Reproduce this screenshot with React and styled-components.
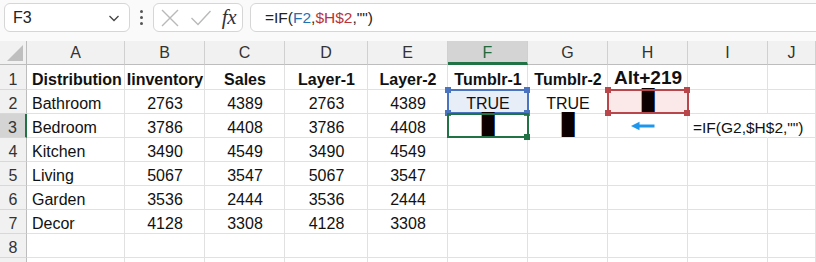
import React from "react";
import styled, { createGlobalStyle, css } from "styled-components";

const Global = createGlobalStyle`
  html, body { margin: 0; padding: 0; background: #ffffff; }
  body { font-family: "Liberation Sans", Arial, sans-serif; overflow: hidden; width: 816px; height: 262px; }
`;

const Page = styled.div`
  width: 816px;
  height: 262px;
  overflow: hidden;
  background: #fafafa;
`;

const Toolbar = styled.div`
  display: flex;
  align-items: flex-start;
  height: 41px;
  box-sizing: border-box;
  padding: 3px 0 0 4px;
  background: #fafafa;
`;

const Box = styled.div`
  height: 29px;
  box-sizing: border-box;
  border: 1px solid #d6d6d6;
  border-radius: 6px;
  background: #ffffff;
  display: flex;
  align-items: center;
`;

const NameBox = styled(Box)`
  width: 126px;
  padding: 0 8px 0 8px;
  justify-content: space-between;
  font-size: 16px;
  color: #222;
`;

const Dots = styled.div`
  width: 4px;
  height: 29px;
  margin: 0 10px 0 9px;
  display: flex;
  flex-direction: column;
  justify-content: center;
  align-items: center;
  gap: 3px;
  span {
    width: 3px;
    height: 3px;
    border-radius: 50%;
    background: #555;
  }
`;

const FxBox = styled(Box)`
  width: 90px;
  padding: 0 6px 0 6px;
  justify-content: space-between;
  margin-right: 7px;
`;

const FxText = styled.span`
  font-family: "Liberation Serif", "Times New Roman", serif;
  font-style: italic;
  font-size: 21px;
  color: #333;
  letter-spacing: -0.5px;
`;

const FormulaBox = styled(Box)`
  flex: 1;
  margin-right: -12px;
  padding-left: 14px;
  font-size: 15.5px;
  color: #222;
  white-space: nowrap;
`;

const Ref = styled.span`
  color: ${(p) => p.$c};
`;

const Sheet = styled.div`
  display: grid;
  grid-template-columns: 27px 98px 80px 80px 83px 80px 80px 80px 80px 80px 1fr;
  grid-template-rows: 24px 25px;
  grid-auto-rows: 24px;
  background: #ffffff;
`;

const headerBase = css`
  box-sizing: border-box;
  display: flex;
  align-items: center;
  justify-content: center;
  font-size: 16px;
  color: #333;
  background: ${(p) => (p.$active ? "#d4d4d4" : "#f1f1f1")};
`;

const Corner = styled.div`
  ${headerBase};
  position: relative;
  border-right: 1px solid #bdbdbd;
  border-bottom: 1px solid #bdbdbd;
`;

const CornerTri = styled.span`
  position: absolute;
  right: 3px;
  bottom: 3px;
  width: 0;
  height: 0;
  border-style: solid;
  border-width: 0 0 16px 16px;
  border-color: transparent transparent #bfbfbf transparent;
`;

const ColHead = styled.div`
  ${headerBase};
  color: ${(p) => (p.$active ? "#1e6b3f" : "#333")};
  border-right: 1px solid #d0d0d0;
  border-bottom: ${(p) => (p.$active ? "3px solid #217346" : "1px solid #bdbdbd")};
  padding-top: ${(p) => (p.$active ? "2px" : "0")};
`;

const RowHead = styled.div`
  ${headerBase};
  border-right: ${(p) => (p.$active ? "2px solid #217346" : "1px solid #bdbdbd")};
  border-bottom: 1px solid #d8d8d8;
  align-items: flex-end;
  padding-bottom: 0;
`;

const frameColors = {
  blue: { line: "#4a74c0", fill: "#e8eef8" },
  green: { line: "#217346", fill: "transparent" },
  red: { line: "#b8464b", fill: "#fbe9ea" },
};

const Cell = styled.div`
  position: relative;
  box-sizing: border-box;
  display: flex;
  align-items: flex-end;
  justify-content: ${(p) => (p.$align === "left" ? "flex-start" : "center")};
  padding: 0 4px 0 5px;
  border-right: ${(p) => (p.$noRight ? "1px solid transparent" : "1px solid #e1e1e1")};
  border-bottom: 1px solid #e1e1e1;
  font-size: ${(p) => (p.$big ? "19px" : "16px")};
  font-weight: ${(p) => (p.$bold ? 700 : 400)};
  color: #111;
  white-space: nowrap;
  overflow: visible;
  background: ${(p) => (p.$frame ? frameColors[p.$frame].fill : "transparent")};
  z-index: ${(p) => (p.$frame === "green" ? 3 : p.$frame ? 2 : "auto")};
`;

const Frame = styled.span`
  position: absolute;
  top: -1px;
  left: -1px;
  right: -2px;
  bottom: -1px;
  border: 2px solid ${(p) => frameColors[p.$c].line};
  pointer-events: none;
`;

const Handle = styled.span`
  position: absolute;
  width: 6px;
  height: 6px;
  background: ${(p) => frameColors[p.$c].line};
  ${(p) => (p.$v === "t" ? "top: -3px;" : "bottom: -3px;")}
  ${(p) => (p.$h === "l" ? "left: -3px;" : "right: -3px;")}
  z-index: 4;
`;

const Block = styled.span`
  font-family: "DejaVu Sans Mono", monospace;
  font-size: 21px;
  line-height: 21px;
  color: #0c0000;
  margin-bottom: 1px;
`;

const Arrow = styled.svg`
  align-self: center;
  margin-left: 18px;
`;

const FormulaCellText = styled.span`
  font-size: 15.5px;
`;

const cols = ["A", "B", "C", "D", "E", "F", "G", "H", "I", "J"];

const data = [
  ["Bathroom", 2763, 4389, 2763, 4389],
  ["Bedroom", 3786, 4408, 3786, 4408],
  ["Kitchen", 3490, 4549, 3490, 4549],
  ["Living", 5067, 3547, 5067, 3547],
  ["Garden", 3536, 2444, 3536, 2444],
  ["Decor", 4128, 3308, 4128, 3308],
];

const headers = ["Distribution", "Iinventory", "Sales", "Layer-1", "Layer-2", "Tumblr-1", "Tumblr-2"];

function Handles({ c, corners }) {
  return corners.map((k) => <Handle key={k} $c={c} $v={k[0]} $h={k[1]} />);
}

const allCorners = ["tl", "tr", "bl", "br"];

function Chevron() {
  return (
    <svg width="14" height="14" viewBox="0 0 14 14">
      <path d="M2.5 5 L7 9.5 L11.5 5" fill="none" stroke="#444" strokeWidth="1.3" />
    </svg>
  );
}

function CrossIcon() {
  return (
    <svg width="20" height="20" viewBox="0 0 20 20">
      <path d="M2 2 L18 18 M18 2 L2 18" stroke="#b9b9b9" strokeWidth="1.4" fill="none" />
    </svg>
  );
}

function CheckIcon() {
  return (
    <svg width="22" height="18" viewBox="0 0 22 18">
      <path d="M1.5 9 L8 15.5 L20.5 2" stroke="#b9b9b9" strokeWidth="1.4" fill="none" />
    </svg>
  );
}

export default function App() {
  const rows = [];

  rows.push(
    <React.Fragment key="r1">
      <RowHead>1</RowHead>
      {headers.map((h, i) => (
        <Cell key={h} $bold $align={i === 0 ? "left" : "center"}>
          {h}
        </Cell>
      ))}
      <Cell $bold $big>Alt+219</Cell>
      <Cell />
      <Cell />
    </React.Fragment>
  );

  data.forEach((r, idx) => {
    const n = idx + 2;
    let extra;
    if (n === 2) {
      extra = [
        <Cell key="f" $frame="blue">
          TRUE
          <Frame $c="blue" />
          <Handles c="blue" corners={allCorners} />
        </Cell>,
        <Cell key="g">TRUE</Cell>,
        <Cell key="h" $frame="red">
          <Block>█</Block>
          <Frame $c="red" />
          <Handles c="red" corners={allCorners} />
        </Cell>,
        <Cell key="i" />,
        <Cell key="j" />,
      ];
    } else if (n === 3) {
      extra = [
        <Cell key="f" $frame="green">
          <Block>█</Block>
          <Frame $c="green" />
          <Handles c="green" corners={["br"]} />
        </Cell>,
        <Cell key="g">
          <Block>█</Block>
        </Cell>,
        <Cell key="h" $align="left">
          <Arrow width="24" height="10" viewBox="0 0 24 10">
            <path d="M6 5 H23.5" stroke="#1f96ee" strokeWidth="3" />
            <path d="M0 5 L8.5 0.8 L8.5 9.2 Z" fill="#1f96ee" />
          </Arrow>
        </Cell>,
        <Cell key="i" $align="left" $noRight>
          <FormulaCellText>=IF(G2,$H$2,"")</FormulaCellText>
        </Cell>,
        <Cell key="j" />,
      ];
    } else {
      extra = [0, 1, 2, 3, 4].map((k) => <Cell key={k} />);
    }
    rows.push(
      <React.Fragment key={"r" + n}>
        <RowHead $active={n === 3}>{n}</RowHead>
        <Cell $align="left">{r[0]}</Cell>
        <Cell>{r[1]}</Cell>
        <Cell>{r[2]}</Cell>
        <Cell>{r[3]}</Cell>
        <Cell>{r[4]}</Cell>
        {extra}
      </React.Fragment>
    );
  });

  [8, 9].forEach((n) => {
    rows.push(
      <React.Fragment key={"r" + n}>
        <RowHead>{n === 8 ? n : ""}</RowHead>
        {cols.map((c) => (
          <Cell key={c} />
        ))}
      </React.Fragment>
    );
  });

  return (
    <Page>
      <Global />
      <Toolbar>
        <NameBox>
          <span>F3</span>
          <Chevron />
        </NameBox>
        <Dots>
          <span />
          <span />
          <span />
        </Dots>
        <FxBox>
          <CrossIcon />
          <CheckIcon />
          <FxText>fx</FxText>
        </FxBox>
        <FormulaBox>
          =IF(<Ref $c="#1f73b7">F2</Ref>,<Ref $c="#b8343a">$H$2</Ref>,"")
        </FormulaBox>
      </Toolbar>
      <Sheet>
        <Corner>
          <CornerTri />
        </Corner>
        {cols.map((c) => (
          <ColHead key={c} $active={c === "F"}>
            {c}
          </ColHead>
        ))}
        {rows}
      </Sheet>
    </Page>
  );
}
